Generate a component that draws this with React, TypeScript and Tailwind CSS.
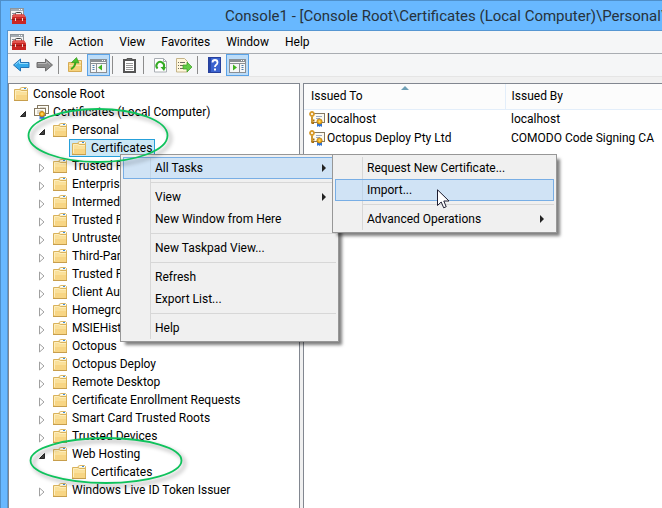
import type { ReactNode } from "react";

function ConsoleIcon() {
  return (
    <svg width="16" height="16" viewBox="0 0 16 16" aria-hidden="true" className="shrink-0">
      <rect x="0.5" y="0.5" width="13" height="11" fill="#f4f4f4" stroke="#8d949a" />
      <rect x="1" y="1" width="12" height="2" fill="#a3abb2" />
      <path d="M9 1.500h1M11 1.500h1" stroke="#fff" />
      <path d="M2 5.500h3M2 7.500h2" stroke="#8a9199" />
      <path d="M5.500 7V5.500Q5.500 4.500 6.500 4.500h4Q11.500 4.500 11.500 5.500V7" fill="none" stroke="#444" />
      <path d="M3 6.500h11l2 3v6.500H2V9.500z" fill="#c92724" />
      <path d="M3.500 6.500h10.500l1.500 2.500h-13z" fill="#e2534c" />
      <path d="M2 11.500h14" stroke="#9d1815" />
      <path d="M5.500 10v3M12.500 10v3" stroke="#f0d5d0" />
    </svg>
  );
}

function FolderIcon() {
  return (
    <svg width="16" height="16" viewBox="0 0 16 16" aria-hidden="true" className="shrink-0">
      <path d="M6 4V2.500L7.500 1.500h5l1 1V5H6z" fill="#fbf1cf" stroke="#d9b666" />
      <path d="M8 2.500h5" stroke="#fff" />
      <path d="M10 2.500h2" stroke="#3f8fe0" />
      <path d="M0.500 3.500h5.500l1.500 1h6v9.500H0.500z" fill="#fae09a" stroke="#d9b25c" />
      <path d="M1 9h12v5H1z" fill="#f7d584" />
      <path d="M1.500 13V4.500h4l1.500 1h6" fill="none" stroke="#fdeebf" />
      <path d="M0 14.500h14" stroke="#c79e4c" />
    </svg>
  );
}

function Ribbon({ x, y }: { x: number; y: number }) {
  return (
    <g transform={`translate(${x} ${y})`}>
      <path d="M-2.500 1L-2.500 5.500L-1 4.500L0 5.500V1zM2.500 1V5.500L1 4.500L0 5.500V1z" fill="#2f74d8" />
      <circle r="2.600" fill="#f2b01e" stroke="#b97908" strokeWidth="0.800" />
      <circle r="0.900" fill="#ffdf75" />
    </g>
  );
}

function CertStoreIcon() {
  return (
    <svg width="16" height="16" viewBox="0 0 16 16" aria-hidden="true" className="shrink-0">
      <rect x="3.500" y="1.500" width="11" height="8" fill="#fffdf5" stroke="#857963" />
      <path d="M6 4h6" stroke="#b8b2a6" />
      <rect x="0.500" y="4.500" width="11" height="7" fill="#fffdf5" stroke="#857963" />
      <path d="M3 7h6M3 9h3" stroke="#b8b2a6" />
      <Ribbon x={8} y={10} />
    </svg>
  );
}

function CertKeyIcon() {
  return (
    <svg width="16" height="16" viewBox="0 0 16 16" aria-hidden="true" className="shrink-0">
      <rect x="3.500" y="2.500" width="12" height="9" fill="#fdfaf0" stroke="#857963" />
      <path d="M7 5.500h6M7 7.500h4" stroke="#9aa9c8" />
      <path d="M3 5v7.500M3 9.500h2.500M3 12h2" stroke="#a66d10" strokeWidth="2" />
      <circle cx="3" cy="3" r="2" fill="#fff" stroke="#d89a2b" strokeWidth="1.800" />
      <path d="M3 5.500v6" stroke="#f4c455" />
      <Ribbon x={10.5} y={10.500} />
    </svg>
  );
}

function Expander({ open }: { open: boolean }) {
  return (
    <svg width="8" height="10" viewBox="0 0 8 10" aria-hidden="true">
      {open ? (
        <path d="M6.500 2.500v5h-5z" fill="#404040" stroke="#262626" />
      ) : (
        <path d="M1.500 1v8l4.500-4z" fill="#fff" stroke="#a0a0a0" />
      )}
    </svg>
  );
}

type Node = { label: string; level: 0 | 1 | 2 | 3; open?: boolean; selected?: boolean };

const tree: Node[] = [
  { label: "Console Root", level: 0 },
  { label: "Certificates (Local Computer)", level: 1, open: true },
  { label: "Personal", level: 2, open: true },
  { label: "Certificates", level: 3, selected: true },
  { label: "Trusted Root Certification Authorities", level: 2, open: false },
  { label: "Enterprise Trust", level: 2, open: false },
  { label: "Intermediate Certification Authorities", level: 2, open: false },
  { label: "Trusted Publishers", level: 2, open: false },
  { label: "Untrusted Certificates", level: 2, open: false },
  { label: "Third-Party Root Certification", level: 2, open: false },
  { label: "Trusted People", level: 2, open: false },
  { label: "Client Authentication Issuers", level: 2, open: false },
  { label: "Homegroup Machine Certificates", level: 2, open: false },
  { label: "MSIEHistoryJournal", level: 2, open: false },
  { label: "Octopus", level: 2, open: false },
  { label: "Octopus Deploy", level: 2, open: false },
  { label: "Remote Desktop", level: 2, open: false },
  { label: "Certificate Enrollment Requests", level: 2, open: false },
  { label: "Smart Card Trusted Roots", level: 2, open: false },
  { label: "Trusted Devices", level: 2, open: false },
  { label: "Web Hosting", level: 2, open: true },
  { label: "Certificates", level: 3 },
  { label: "Windows Live ID Token Issuer", level: 2, open: false },
];

const indent = ["pl-0", "pl-[8px]", "pl-[27px]", "pl-[46px]"];

function TreeRow({ node }: { node: Node }) {
  return (
    <li
      role="treeitem"
      aria-level={node.level + 1}
      aria-expanded={node.open}
      aria-selected={!!node.selected}
      className={`flex h-[18px] items-center ${indent[node.level]}`}
    >
      {node.level > 0 && (
        <span className="flex w-[12px] shrink-0 items-center pt-[3px]">
          {node.open !== undefined && <Expander open={node.open} />}
        </span>
      )}
      <span
        className={`flex h-[18px] items-center gap-[3px] whitespace-nowrap border px-[2px] ${
          node.selected ? "border-[#26a0da] bg-[#cbe8f6]" : "border-transparent"
        }`}
      >
        {node.level === 1 ? <CertStoreIcon /> : <FolderIcon />}
        {node.label}
      </span>
    </li>
  );
}

function ToolButton({ label, pressed, children }: { label: string; pressed?: boolean; children: ReactNode }) {
  return (
    <button
      type="button"
      aria-label={label}
      className={`flex h-[22px] w-[23px] items-center justify-center border ${
        pressed ? "border-[#5aa2e6] bg-[#bcdcf8]" : "border-transparent"
      }`}
    >
      <svg width="17" height="16" viewBox="0 0 17 16" aria-hidden="true">
        {children}
      </svg>
    </button>
  );
}

function ToolSep() {
  return <div className="mr-[5px] ml-[2px] h-[18px] w-px bg-[#8c8c8c]" />;
}

function MenuRow({ label, arrow, active }: { label: string; arrow?: boolean; active?: boolean }) {
  return (
    <button
      type="button"
      role="menuitem"
      className={`relative flex h-[22px] w-full items-center justify-between border pr-[8px] pl-[31px] text-left whitespace-nowrap ${
        active ? "border-[#78aee5] bg-[#a8d2fa]/45" : "border-transparent"
      }`}
    >
      {label}
      {arrow && (
        <svg width="5" height="8" viewBox="0 0 5 8" aria-hidden="true">
          <path d="M0 0v8l4-4z" fill="#222" />
        </svg>
      )}
    </button>
  );
}

function MenuSep() {
  return (
    <div role="separator" className="flex h-[7px] items-center pl-[28px]">
      <div className="h-px w-full bg-[#d7d7d7]" />
    </div>
  );
}

function Menu({ label, place, children }: { label: string; place: string; children: ReactNode }) {
  return (
    <div
      role="menu"
      aria-label={label}
      className={`absolute border border-[#979797] bg-[#f0f0f0] p-[2px] shadow-[4px_4px_3px_-1px_rgba(0,0,0,0.5)] ${place}`}
    >
      <div className="absolute inset-y-[2px] left-[29px] w-px bg-[#d7d7d7]" />
      {children}
    </div>
  );
}

const menus = ["File", "Action", "View", "Favorites", "Window", "Help"];
const certs = [
  { to: "localhost", by: "localhost" },
  { to: "Octopus Deploy Pty Ltd", by: "COMODO Code Signing CA" },
];

export default function App() {
  return (
    <div className="relative flex h-screen flex-col overflow-hidden border-t border-l border-[#4f8fc9] bg-[#68b8ff] font-[Roboto,'Open_Sans',sans-serif] text-[12px] leading-[16px] text-black">
      <header className="flex h-[29px] shrink-0 items-center pl-[9px]">
        <ConsoleIcon />
        <h1 className="ml-[199px] overflow-hidden text-[15px] leading-[20px] whitespace-nowrap text-[#26323c]">
          Console1 - [Console Root\Certificates (Local Computer)\Personal\Certificates]
        </h1>
      </header>

      <div className="ml-[6px] flex min-h-0 flex-1 flex-col border-t border-l border-[#5596d2] bg-[#f0f0f0]">
        <nav aria-label="Main menu" className="flex h-[23px] shrink-0 items-center border-b border-[#a9adb2] bg-[#f5f6f7] pl-[2px]">
          <ConsoleIcon />
          <div className="flex">
            {menus.map((m) => (
              <button type="button" key={m} className="px-[8px]">
                {m}
              </button>
            ))}
          </div>
        </nav>

        <div role="toolbar" aria-label="Tools" className="flex h-[23px] shrink-0 items-center border-b border-[#e5e5e5] bg-[#f5f6f7] pl-[2px]">
          <ToolButton label="Back">
            <path d="M0.500 8L7.500 2v3.500H16v5H7.500V14z" fill="#35a9ea" stroke="#2573b5" />
            <path d="M2.500 7.500L6.500 4v2.500H15" fill="none" stroke="#93dcff" />
          </ToolButton>
          <ToolButton label="Forward">
            <path d="M16.500 8L9.500 2v3.500H1v5h8.500V14z" fill="#8c8c8c" stroke="#6d6d6d" />
            <path d="M2 6.500h8.500V4.500l3.500 3" fill="none" stroke="#b5b5b5" />
          </ToolButton>
          <ToolSep />
          <ToolButton label="Up one level">
            <path d="M1.500 5.500h5l1-2h7v11h-13z" fill="#f6d27b" stroke="#d5ab55" />
            <path d="M9 5h5" stroke="#fff4cf" />
            <path d="M2 8.500h12" stroke="#fbe7ad" />
            <path d="M4 12Q8 10 8.500 5" fill="none" stroke="#3aa81e" strokeWidth="2" />
            <path d="M4.500 5.500L9.500 0.500L12 6z" fill="#4cc12c" stroke="#2f8f18" strokeWidth="0.600" />
          </ToolButton>
          <ToolButton label="Show or hide console tree" pressed>
            <rect x="0.500" y="2.500" width="16" height="13" fill="#f7f7f7" stroke="#8a8f94" />
            <path d="M1 4h15" stroke="#8a8f94" strokeWidth="2" />
            <path d="M12 3.500h1M14 3.500h1" stroke="#fff" />
            <path d="M1 6.500h15M6.500 7v8" stroke="#8a8f94" />
            <path d="M2.500 8.500h2M2.500 10.500h2M2.500 12.500h2" stroke="#4f7fae" />
            <path d="M12 7.500v6l-4-3z" fill="#3fb31f" />
          </ToolButton>
          <ToolSep />
          <ToolButton label="Paste">
            <rect x="3" y="3" width="11" height="12" fill="#fff" stroke="#555" strokeWidth="2" />
            <path d="M6 3V1.500h5V3z" fill="#777" stroke="#555" />
            <path d="M5 6.500h7M5 8.500h7M5 10.500h7M5 12.500h7" stroke="#9a9a9a" />
          </ToolButton>
          <ToolSep />
          <ToolButton label="Refresh">
            <path d="M2.500 1.500h9l3 3v10.500h-12z" fill="#fff" stroke="#a8adb3" />
            <path d="M11.500 1.500v3h3" fill="none" stroke="#a8adb3" />
            <path d="M5.600 11.500A3.800 3.800 0 1 1 11.600 10.500" fill="none" stroke="#35ab25" strokeWidth="2" />
            <path d="M8.500 10h5.500l-2 4z" fill="#35ab25" />
          </ToolButton>
          <ToolButton label="Export list">
            <path d="M1.500 1.500h8l3 3v10.500h-11z" fill="#fff7dc" stroke="#c4b48a" />
            <path d="M3 5.500h1M5 5.500h5M3 8.500h1M5 8.500h4M3 11.500h1M5 11.500h4" stroke="#6f6b60" />
            <path d="M8 8h4V5l5 5l-5 5v-3H8z" fill="#62cc46" stroke="#389a20" strokeWidth="0.700" />
          </ToolButton>
          <ToolSep />
          <ToolButton label="Help">
            <rect x="2.500" y="0.500" width="12" height="15" fill="#3b63cf" stroke="#27409c" />
            <path d="M3 1h2v14H3z" fill="#2746a8" />
            <path d="M6.500 5.500Q6.500 3 9 3T11.500 5.500Q11.500 7 10 8Q9 8.700 9 10" fill="none" stroke="#fff" strokeWidth="1.800" />
            <path d="M8 11.500h2v2H8z" fill="#fff" />
          </ToolButton>
          <ToolButton label="Show or hide action pane" pressed>
            <rect x="0.500" y="2.500" width="16" height="13" fill="#f7f7f7" stroke="#8a8f94" />
            <path d="M1 4h15" stroke="#8a8f94" strokeWidth="2" />
            <path d="M12 3.500h1M14 3.500h1" stroke="#fff" />
            <path d="M1 6.500h15M10.500 7v8" stroke="#8a8f94" />
            <path d="M12.500 8.500h2M12.500 10.500h2M12.500 12.500h2" stroke="#4f7fae" />
            <path d="M4 7.500v6l4-3z" fill="#3fb31f" />
          </ToolButton>
        </div>

        <main className="mt-[6px] flex min-h-0 flex-1 gap-[3px]">
          <ul role="tree" aria-label="Console tree" className="w-[292px] shrink-0 overflow-hidden border border-b-0 border-[#828790] bg-white pt-px pl-[2px]">
            {tree.map((n, i) => (
              <TreeRow key={i} node={n} />
            ))}
          </ul>

          <section className="relative min-w-0 flex-1 overflow-hidden border-t border-l border-[#828790] bg-white">
            <svg width="8" height="4" viewBox="0 0 8 4" aria-hidden="true" className="absolute top-[2px] left-[97px]">
              <path d="M0 4L4 0l4 4z" fill="#6f9fb5" />
            </svg>
            <table className="w-full table-fixed border-collapse text-left whitespace-nowrap">
              <colgroup>
                <col className="w-[201px]" />
                <col />
              </colgroup>
              <thead>
                <tr className="h-[25px] border-b border-[#e3eefa] bg-[#fcfcfc]">
                  <th className="border-r border-[#e3eefa] p-0 pl-[7px] font-normal">Issued To</th>
                  <th className="p-0 pl-[6px] font-normal">Issued By</th>
                </tr>
              </thead>
              <tbody>
                {certs.map((c) => (
                  <tr key={c.to} className="h-[19px]">
                    <td className="p-0 pl-[5px]">
                      <span className="flex items-center gap-[2px]">
                        <CertKeyIcon />
                        {c.to}
                      </span>
                    </td>
                    <td className="p-0 pl-[6px]">{c.by}</td>
                  </tr>
                ))}
              </tbody>
            </table>
          </section>
        </main>
      </div>

      <Menu label="Certificates" place="top-[153px] left-[119px] w-[219px]">
        <MenuRow label="All Tasks" arrow active />
        <MenuSep />
        <MenuRow label="View" arrow />
        <MenuRow label="New Window from Here" />
        <MenuSep />
        <MenuRow label="New Taskpad View..." />
        <MenuSep />
        <MenuRow label="Refresh" />
        <MenuRow label="Export List..." />
        <MenuSep />
        <MenuRow label="Help" />
      </Menu>

      <Menu label="All Tasks" place="top-[153px] left-[331px] w-[225px]">
        <MenuRow label="Request New Certificate..." />
        <MenuRow label="Import..." active />
        <MenuSep />
        <MenuRow label="Advanced Operations" arrow />
      </Menu>

      <svg width="146" height="60" viewBox="0 0 146 60" aria-hidden="true" className="pointer-events-none absolute top-[105px] left-[24px] overflow-visible drop-shadow-[3px_3px_2px_rgba(0,0,0,0.4)]">
        <ellipse cx="73" cy="29.500" rx="69.500" ry="26.500" fill="none" stroke="#0fc25c" strokeWidth="1.800" />
      </svg>
      <svg width="158" height="52" viewBox="0 0 158 52" aria-hidden="true" className="pointer-events-none absolute top-[433px] left-[26px] overflow-visible drop-shadow-[3px_3px_2px_rgba(0,0,0,0.4)]">
        <ellipse cx="79" cy="26.500" rx="75.500" ry="22.500" fill="none" stroke="#0fc25c" strokeWidth="1.800" />
      </svg>
      <svg width="13" height="20" viewBox="0 0 13 20" aria-hidden="true" className="pointer-events-none absolute top-[188px] left-[436px]">
        <path d="M0.500 0.800V16.500L4.200 13L6.700 18.800L9.200 17.700L6.800 12H12z" fill="#fff" stroke="#1d1d30" />
      </svg>
    </div>
  );
}
